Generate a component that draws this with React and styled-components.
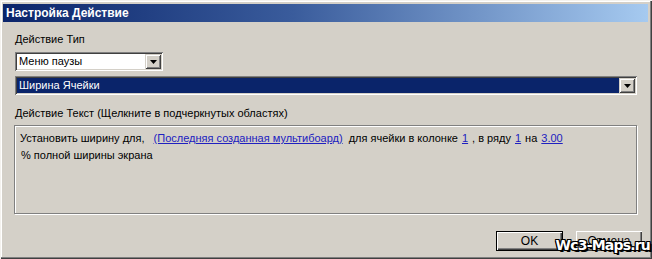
import React from 'react';
import styled, { createGlobalStyle } from 'styled-components';

const GlobalStyle = createGlobalStyle`
  html, body {
    margin: 0;
    padding: 0;
    background: #d4d0c8;
  }
  * {
    box-sizing: border-box;
  }
`;

const Window = styled.div`
  position: relative;
  width: 652px;
  height: 259px;
  padding: 4px 4px 4px 3px;
  background: #d4d0c8;
  font-family: 'Liberation Sans', Arial, sans-serif;
  font-size: 11px;
  color: #000;
  box-shadow: inset 1px 1px #f4f2ee, inset -1px -1px #404040,
    inset -2px -2px #808080, inset 2px 2px #ffffff;
  display: flex;
  flex-direction: column;
`;

const TitleBar = styled.div`
  height: 18px;
  display: flex;
  align-items: center;
  padding-left: 3px;
  background: linear-gradient(to right, #0a246a 0%, #3a5c9c 45%, #a6caf0 100%);
  color: #fff;
  font-weight: 700;
  font-size: 12px;
`;

const Content = styled.div`
  flex: 1;
  display: flex;
  flex-direction: column;
  padding: 10px 11px 0 12px;
`;

const Label = styled.div`
  height: 14px;
  line-height: 14px;
  margin-bottom: ${({ $gap }) => $gap || 0}px;
`;

const Combo = styled.div`
  width: ${({ $width }) => ($width ? `${$width}px` : '100%')};
  height: 19px;
  display: flex;
  align-items: stretch;
  padding: 2px;
  background: ${({ $selected }) => ($selected ? '#0a246a' : '#fff')};
  box-shadow: inset 1px 1px #808080, inset -1px -1px #ffffff,
    inset 2px 2px #404040, inset -2px -2px #d4d0c8;
  margin-bottom: ${({ $gap }) => $gap || 0}px;
`;

const ComboValue = styled.div`
  flex: 1;
  padding-left: 2px;
  line-height: 15px;
  color: ${({ $selected }) => ($selected ? '#fff' : '#000')};
`;

const ComboButton = styled.div`
  width: 16px;
  display: flex;
  align-items: center;
  justify-content: center;
  background: #d4d0c8;
  box-shadow: inset 1px 1px #d4d0c8, inset -1px -1px #404040,
    inset 2px 2px #ffffff, inset -2px -2px #808080;
`;

const TextBox = styled.div`
  height: 89px;
  margin-left: -1px;
  margin-right: 0;
  padding: 4px 5px;
  border: 1px solid #808080;
  box-shadow: inset 1px 1px #ffffff, 1px 1px #ffffff;
  line-height: 17px;
`;

const Line = styled.div`
  white-space: nowrap;
  padding-left: ${({ $indent }) => $indent || 0}px;
`;

const Link = styled.span`
  color: #2020c0;
  text-decoration: underline;
  margin: 0 ${({ $m }) => $m ?? 4}px;
`;

const Footer = styled.div`
  display: flex;
  justify-content: flex-end;
  gap: 13px;
  padding-top: 17px;
  margin-right: -5px;
`;

const Button = styled.div`
  width: ${({ $width }) => $width}px;
  height: 20px;
  display: flex;
  align-items: center;
  justify-content: center;
  font-size: 12px;
  background: #d4d0c8;
  border: ${({ $default }) => ($default ? '1px solid #000' : '0')};
  box-shadow: inset 1px 1px #ffffff, inset -1px -1px #404040,
    inset -2px -2px #808080;
`;

const Watermark = styled.div`
  position: absolute;
  right: 2px;
  bottom: 6px;
  font-family: 'DejaVu Sans', Verdana, sans-serif;
  font-weight: 700;
  font-size: 14px;
  letter-spacing: -0.8px;
  color: #fff;
  text-shadow: 1px 0 #000, -1px 0 #000, 0 1px #000, 0 -1px #000,
    1px 1px #000, -1px -1px #000, 1px -1px #000, -1px 1px #000,
    2px 2px #000;
`;

function Arrow() {
  return (
    <svg width="7" height="4" viewBox="0 0 7 4">
      <path d="M0 0h7L3.5 4z" fill="#000" />
    </svg>
  );
}

export default function App() {
  return (
    <>
      <GlobalStyle />
      <Window>
        <TitleBar>Настройка Действие</TitleBar>
        <Content>
          <Label $gap={6}>Действие Тип</Label>
          <Combo $width={148} $gap={5}>
            <ComboValue>Меню паузы</ComboValue>
            <ComboButton>
              <Arrow />
            </ComboButton>
          </Combo>
          <Combo $selected $gap={11}>
            <ComboValue $selected>Ширина Ячейки</ComboValue>
            <ComboButton>
              <Arrow />
            </ComboButton>
          </Combo>
          <Label $gap={5}>Действие Текст (Щелкните в подчеркнутых областях)</Label>
          <TextBox>
            <Line>
              Установить ширину для, <Link $m={6}>(Последняя созданная мультибоард)</Link>
              для ячейки в колонке<Link $m={4}>1</Link>, в ряду<Link $m={4}>1</Link>на
              <Link $m={4}>3.00</Link>
            </Line>
            <Line $indent={1}>% полной ширины экрана</Line>
          </TextBox>
          <Footer>
            <Button $default $width={67}>OK</Button>
            <Button $width={66}>Отмена</Button>
          </Footer>
        </Content>
        <Watermark>Wc3-Maps.ru</Watermark>
      </Window>
    </>
  );
}
